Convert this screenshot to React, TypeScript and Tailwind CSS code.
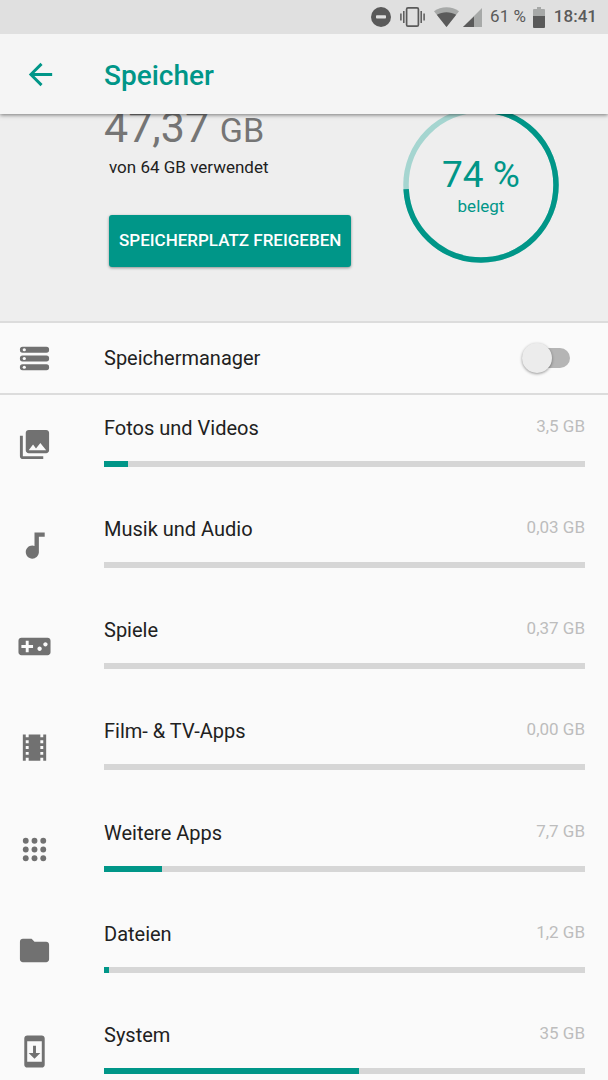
import { useState } from 'react';
import type { ReactNode } from 'react';
import {
  MdArrowBack,
  MdAudiotrack,
  MdFolder,
  MdPhotoLibrary,
  MdSystemUpdate,
  MdTheaters,
  MdVideogameAsset,
} from 'react-icons/md';

const TOTAL_GB = 64;

const categories = [
  { name: 'Fotos und Videos', size: '3,5 GB', percent: 5, icon: <MdPhotoLibrary size={35} /> },
  { name: 'Musik und Audio', size: '0,03 GB', percent: 0, icon: <MdAudiotrack size={35} /> },
  { name: 'Spiele', size: '0,37 GB', percent: 0, icon: <MdVideogameAsset size={35} /> },
  { name: 'Film- & TV-Apps', size: '0,00 GB', percent: 0, icon: <MdTheaters size={35} /> },
  { name: 'Weitere Apps', size: '7,7 GB', percent: 12, icon: <AppsIcon /> },
  { name: 'Dateien', size: '1,2 GB', percent: 1, icon: <MdFolder size={35} /> },
  { name: 'System', size: '35 GB', percent: 53, icon: <MdSystemUpdate size={35} /> },
];

function AppsIcon() {
  return (
    <svg width="35" height="35" viewBox="0 0 24 24" fill="currentColor">
      {[6, 12, 18].map((y) => [6, 12, 18].map((x) => <circle key={`${x}-${y}`} cx={x} cy={y} r="2" />))}
    </svg>
  );
}

function StorageIcon() {
  return (
    <svg width="35" height="35" viewBox="0 0 24 24">
      {[4, 10, 16].map((y) => (
        <g key={y}>
          <rect x="2" y={y} width="20" height="4" rx="1.8" fill="currentColor" />
          <circle cx="5" cy={y + 2} r="1.1" fill="#fafafa" />
        </g>
      ))}
    </svg>
  );
}

function StatusBar() {
  return (
    <div className="flex h-[34px] items-center justify-end bg-[#e0e0e0] pr-[11px] text-[17px] text-[#5a5a5a]">
      {/* Do not disturb */}
      <svg width="20" height="20" viewBox="0 0 20 20" className="mr-[9px]">
        <circle cx="10" cy="10" r="10" fill="#5a5a5a" />
        <rect x="5" y="8.2" width="10" height="3.4" rx="0.8" fill="#e0e0e0" />
      </svg>
      {/* Vibrate */}
      <svg width="25" height="20" viewBox="0 0 25 20" className="mr-[9px]" fill="none" stroke="#5a5a5a">
        <rect x="6.6" y="0.9" width="11.8" height="18.2" rx="1.4" strokeWidth="1.7" />
        <path d="M3.8 4v12M21.2 4v12" strokeWidth="1.5" />
        <path d="M0.9 6.5v7M24.1 6.5v7" strokeWidth="1.5" />
      </svg>
      {/* Wifi */}
      <svg width="25" height="20" viewBox="0 0 25 20" className="mr-1">
        <path d="M12.5 20 0 4.2C7-1.2 18-1.2 25 4.2Z" fill="#a7a9a8" />
        <path d="M12.5 20 2.8 7.8C8.5 4.4 16.5 4.4 22.2 7.8Z" fill="#5a5a5a" />
      </svg>
      {/* Mobile signal */}
      <svg width="19" height="20" viewBox="0 0 19 20" className="mr-2">
        <path d="M19 1v19H0Z" fill="#a7a9a8" />
        <path d="M11 9.4V20H0Z" fill="#5a5a5a" />
      </svg>
      <span>61 %</span>
      {/* Battery */}
      <svg width="12" height="21" viewBox="0 0 12 21" className="mr-[9px] ml-[7px]">
        <path d="M4 0h4v2h3q1 0 1 1v7H0V3q0-1 1-1h3Z" fill="#a7a9a8" />
        <path d="M0 9h12v11q0 1-1 1H1q-1 0-1-1Z" fill="#5a5a5a" />
      </svg>
      <span className="font-medium">18:41</span>
    </div>
  );
}

function UsageRing({ percent }: { percent: number }) {
  const radius = 75;
  const length = 2 * Math.PI * radius;

  return (
    <div className="relative size-[156px]">
      <svg viewBox="0 0 156 156" className="size-full -rotate-90" fill="none" strokeWidth="5.5">
        <circle cx="78" cy="78" r={radius} stroke="#a5d5d0" />
        <circle cx="78" cy="78" r={radius} stroke="#009688" strokeDasharray={`${(length * percent) / 100} ${length}`} />
      </svg>
      <div className="absolute inset-0 flex flex-col items-center justify-center pt-[3px] text-[#009688]">
        <span className="text-[37px] leading-[38px]">{percent} %</span>
        <span className="text-[17px] leading-6">belegt</span>
      </div>
    </div>
  );
}

function Row({ icon, children }: { icon: ReactNode; children: ReactNode }) {
  return (
    <div className="flex pr-[23px]">
      <div className="w-[104px] shrink-0 pt-[11px] pl-[17px] text-[#717171]">{icon}</div>
      <div className="min-w-0 flex-1">{children}</div>
    </div>
  );
}

export default function App() {
  const [managerOn, setManagerOn] = useState(false);

  return (
    <div className="flex min-h-screen flex-col bg-[#fafafa] text-[#212121]" style={{ fontFamily: 'Roboto, sans-serif' }}>
      {/* Header */}
      <div className="sticky top-0 z-10 shadow-[0_1px_4px_rgba(0,0,0,0.5)]">
        <StatusBar />
        <header className="flex h-20 items-center bg-[#f5f5f5] text-[#009688]">
          <div className="w-[104px] shrink-0 pl-[23px]">
            <button type="button" aria-label="Zurück" className="block">
              <MdArrowBack size={35} />
            </button>
          </div>
          <h1 className="pt-[3px] text-[28px] font-medium">Speicher</h1>
        </header>
      </div>

      {/* Usage summary, partly scrolled under the header */}
      <section className="-mt-[11px] flex justify-between border-b-2 border-[#dcdcdc] bg-[#eeeeee] pr-[49px] pb-[54px] pl-[104px]">
        <div>
          <p className="text-[43px] leading-[49px] text-[#757575]">
            47,37 <span className="text-[34px]">GB</span>
          </p>
          <p className="pl-[5px] text-[17px] leading-6">von {TOTAL_GB} GB verwendet</p>
          <button
            type="button"
            className="mt-9 ml-[5px] h-[52px] rounded-[3px] bg-[#009688] px-[10px] text-[17px] font-medium text-white uppercase shadow-[0_1px_3px_rgba(0,0,0,0.4)]"
          >
            Speicherplatz freigeben
          </button>
        </div>
        <div className="pt-1">
          <UsageRing percent={74} />
        </div>
      </section>

      {/* Storage manager */}
      <div className="flex h-[72px] items-center border-b-2 border-[#dcdcdc] pr-[38px]">
        <div className="w-[104px] shrink-0 pl-[17px] text-[#717171]">
          <StorageIcon />
        </div>
        <label htmlFor="storage-manager" className="flex-1 text-[20px]">
          Speichermanager
        </label>
        <input
          id="storage-manager"
          type="checkbox"
          role="switch"
          checked={managerOn}
          onChange={(e) => setManagerOn(e.target.checked)}
          className="relative h-[30px] w-12 appearance-none before:absolute before:inset-x-0 before:inset-y-[5px] before:rounded-full before:bg-[#b5b5b5] after:absolute after:top-0 after:left-0 after:size-[30px] after:rounded-full after:bg-[#ececec] after:shadow-[0_1px_3px_rgba(0,0,0,0.4)] checked:before:bg-[#80cbc4] checked:after:left-[18px] checked:after:bg-[#009688]"
        />
      </div>

      {/* Categories */}
      <main className="flex flex-1 flex-col justify-between gap-10 pt-[21px] pb-[6px]">
        {categories.map((category) => (
          <Row key={category.name} icon={category.icon}>
            <div className="flex justify-between leading-6">
              <span className="text-[20px]">{category.name}</span>
              <span className="-mt-[2px] text-[17px] text-[#bdbdbd]">{category.size}</span>
            </div>
            <div
              role="progressbar"
              aria-label={category.name}
              aria-valuenow={category.percent}
              className="mt-[21px] h-[6px] bg-[#d6d6d6]"
            >
              <div className="h-full bg-[#009688]" style={{ width: `${category.percent}%` }} />
            </div>
          </Row>
        ))}
      </main>
    </div>
  );
}
